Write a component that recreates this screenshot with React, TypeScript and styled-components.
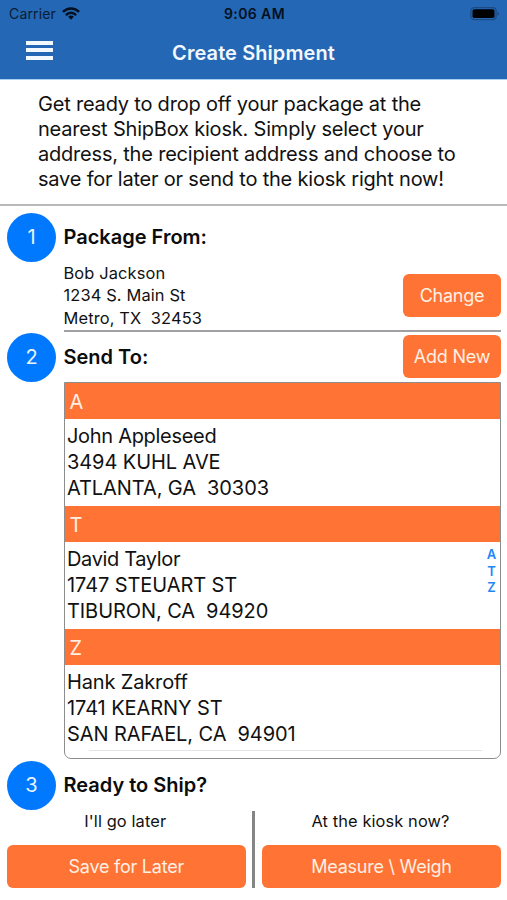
import React from 'react';
import styled, { createGlobalStyle } from 'styled-components';

const blue = '#2467b4';
const accent = '#0079ff';
const orange = '#ff7334';

const GlobalStyle = createGlobalStyle`
  * { box-sizing: border-box; }
  body { margin: 0; background: #fff; }
`;

const Screen = styled.div`
  display: flex;
  flex-direction: column;
  width: 507px;
  height: 900px;
  overflow: hidden;
  background: #fff;
  color: #111;
  font-family: Inter, 'Liberation Sans', sans-serif;
  white-space: pre;
`;

const Header = styled.header`
  flex: none;
  height: 80px;
  background: ${blue};
  border-bottom: 1px solid #a9d0f3;
`;

const StatusBar = styled.div`
  display: grid;
  grid-template-columns: 1fr auto 1fr;
  align-items: center;
  height: 27px;
  padding: 0 7px 0 9px;
  color: #0a1c33;
  font-size: 14px;
  line-height: 27px;
`;

const Carrier = styled.div`
  display: flex;
  align-items: center;
  gap: 6px;
  letter-spacing: 0.15px;
`;

const Clock = styled.div`
  color: #04101f;
  font-weight: 600;
  letter-spacing: 0.4px;
`;

const BatterySlot = styled.div`
  display: flex;
  justify-content: flex-end;
`;

const NavBar = styled.div`
  display: grid;
  grid-template-columns: 1fr auto 1fr;
  align-items: center;
  height: 51px;
  padding: 0 26px;
`;

const MenuButton = styled.button`
  display: flex;
  flex-direction: column;
  gap: 3.5px;
  width: 27px;
  height: 19px;
  margin: 0 0 5px;
  padding: 0;
  border: 0;
  background: none;
`;

const MenuBar = styled.span`
  height: 4px;
  background: #f2f9ff;
`;

const Title = styled.h1`
  margin: 0;
  color: #f2f8ff;
  font-size: 20px;
  font-weight: 600;
  letter-spacing: 0.08px;
`;

const Intro = styled.p`
  flex: none;
  height: 126px;
  margin: 0;
  padding: 12.4px 38px 0;
  border-bottom: 2px solid #b9b9b9;
  font-size: 20px;
  line-height: 24.8px;
  letter-spacing: -0.2px;
`;

const Step = styled.section<{ $height: number; $top?: number }>`
  display: grid;
  grid-template-columns: 49px 437.5px;
  column-gap: 7.5px;
  flex: none;
  height: ${p => p.$height}px;
  padding: ${p => p.$top ?? 0}px 6px 0 7px;
`;

const StepNumber = styled.div`
  display: flex;
  align-items: center;
  justify-content: center;
  width: 49px;
  height: 49px;
  margin-top: 0.5px;
  border-radius: 50%;
  background: ${accent};
  color: #e9f4ff;
  font-size: 20px;
`;

const StepBody = styled.div`
  display: flex;
  flex-direction: column;
`;

const StepHead = styled.div`
  display: flex;
  align-items: center;
  justify-content: space-between;
  height: 49px;
`;

const StepTitle = styled.h2`
  margin: 0;
  color: #0c0c0c;
  font-size: 20px;
  font-weight: 600;
  line-height: 24px;
`;

const Sender = styled.div`
  display: flex;
  justify-content: space-between;
  height: 71px;
  border-bottom: 2px solid #a0a0a4;
`;

const SenderAddress = styled.address`
  padding-top: 0.7px;
  font-size: 16.4px;
  font-style: normal;
  line-height: 22.5px;
  letter-spacing: 0.14px;
`;

const Button = styled.button<{ $wide?: boolean; $top?: number }>`
  width: ${p => (p.$wide ? '100%' : '98px')};
  height: 43px;
  margin: ${p => p.$top ?? 0}px 0 0;
  padding: 0;
  border: 0;
  border-radius: 6px;
  background: ${orange};
  color: #fff0e4;
  font-family: inherit;
  font-size: 18px;
  letter-spacing: -0.24px;
`;

const Contacts = styled.div`
  position: relative;
  height: 377px;
  margin-top: 1px;
  border: 1.5px solid #8d8d8d;
  border-radius: 0 0 7px 7px;
  overflow: hidden;
`;

const GroupLetter = styled.div`
  height: 36px;
  padding-left: 5px;
  background: ${orange};
  color: #fff0e4;
  font-size: 20px;
  line-height: 38px;
`;

const Contact = styled.address`
  height: 87px;
  padding: 4px 2.5px 0;
  font-size: 20px;
  font-style: normal;
  line-height: 26px;
`;

const ContactLine = styled.div<{ $spacing: number }>`
  letter-spacing: ${p => p.$spacing}px;
`;

const ListEnd = styled.hr`
  height: 1px;
  margin: -2px 18px 0 24px;
  border: 0;
  background: #e4e4e6;
`;

const LetterIndex = styled.nav`
  position: absolute;
  top: 163px;
  right: 2.5px;
  display: flex;
  flex-direction: column;
  align-items: center;
  width: 12px;
  color: #1e86f7;
  font-size: 13px;
  font-weight: 600;
  line-height: 16.6px;
`;

const Actions = styled.div`
  display: grid;
  grid-template-columns: 238.5px 3px 239px;
  justify-content: space-between;
  flex: none;
  height: 77px;
  margin: 1px 6px 0 7px;
`;

const Action = styled.div`
  display: flex;
  flex-direction: column;
  align-items: center;
`;

const ActionLabel = styled.div`
  height: 34px;
  padding-right: 2px;
  font-size: 16.4px;
  line-height: 21px;
  letter-spacing: 0.11px;
`;

const Divider = styled.div`
  background: #858585;
`;

const contacts = [
  { letter: 'A', name: 'John Appleseed', spacing: -0.3, lines: ['3494 KUHL AVE', 'ATLANTA, GA  30303'] },
  { letter: 'T', name: 'David Taylor', spacing: -0.36, lines: ['1747 STEUART ST', 'TIBURON, CA  94920'] },
  { letter: 'Z', name: 'Hank Zakroff', spacing: -0.15, lines: ['1741 KEARNY ST', 'SAN RAFAEL, CA  94901'] },
];

const WifiIcon = () => (
  <svg width="18" height="14" viewBox="0 0 18 14" fill="none" stroke="#04101f" strokeWidth="2.5">
    <path d="M.9 4.9C5.6.3 12.4.3 17.1 4.9" />
    <path d="M3.9 8.1C7 5 11 5 14.1 8.1" />
    <path d="M9 8.6C7.8 8.6 6.9 9 6.2 9.8L9 12.8L11.8 9.8C11.1 9 10.2 8.6 9 8.6Z" fill="#04101f" stroke="none" />
  </svg>
);

const BatteryIcon = () => (
  <svg width="30" height="14" viewBox="0 0 30 14">
    <rect x=".9" y=".6" width="25.2" height="12" rx="3.4" fill="none" stroke="#1b4b82" strokeWidth="1.3" />
    <rect x="2.5" y="2.2" width="22" height="8.8" rx="1.8" fill="#000" />
    <path d="M27.5 4.7c2 .6 2 3.4 0 4Z" fill="#1b4b82" />
  </svg>
);

export default function App() {
  return (
    <>
      <GlobalStyle />
      <Screen>
        <Header>
          <StatusBar>
            <Carrier>Carrier<WifiIcon /></Carrier>
            <Clock>9:06 AM</Clock>
            <BatterySlot><BatteryIcon /></BatterySlot>
          </StatusBar>
          <NavBar>
            <MenuButton aria-label="Menu"><MenuBar /><MenuBar /><MenuBar /></MenuButton>
            <Title>Create Shipment</Title>
          </NavBar>
        </Header>
        <Intro>
          {'Get ready to drop off your package at the\nnearest ShipBox kiosk. Simply select your\naddress, the recipient address and choose to\nsave for later or send to the kiosk right now!'}
        </Intro>
        <Step $height={126} $top={6}>
          <StepNumber>1</StepNumber>
          <StepBody>
            <StepHead><StepTitle>Package From:</StepTitle></StepHead>
            <Sender>
              <SenderAddress>{'Bob Jackson\n1234 S. Main St\nMetro, TX  32453'}</SenderAddress>
              <Button $top={13}>Change</Button>
            </Sender>
          </StepBody>
        </Step>
        <Step $height={428}>
          <StepNumber>2</StepNumber>
          <StepBody>
            <StepHead>
              <StepTitle>Send To:</StepTitle>
              <Button>Add New</Button>
            </StepHead>
            <Contacts>
              {contacts.map(c => (
                <React.Fragment key={c.letter}>
                  <GroupLetter>{c.letter}</GroupLetter>
                  <Contact>
                    <ContactLine $spacing={c.spacing}>{c.name}</ContactLine>
                    {c.lines.map(line => (
                      <ContactLine key={line} $spacing={-0.08}>{line}</ContactLine>
                    ))}
                  </Contact>
                </React.Fragment>
              ))}
              <ListEnd />
              <LetterIndex>
                {contacts.map(c => <span key={c.letter}>{c.letter}</span>)}
              </LetterIndex>
            </Contacts>
          </StepBody>
        </Step>
        <Step $height={50}>
          <StepNumber>3</StepNumber>
          <StepBody>
            <StepHead><StepTitle>Ready to Ship?</StepTitle></StepHead>
          </StepBody>
        </Step>
        <Actions>
          <Action>
            <ActionLabel>I'll go later</ActionLabel>
            <Button $wide>Save for Later</Button>
          </Action>
          <Divider />
          <Action>
            <ActionLabel>At the kiosk now?</ActionLabel>
            <Button $wide>Measure \ Weigh</Button>
          </Action>
        </Actions>
      </Screen>
    </>
  );
}
